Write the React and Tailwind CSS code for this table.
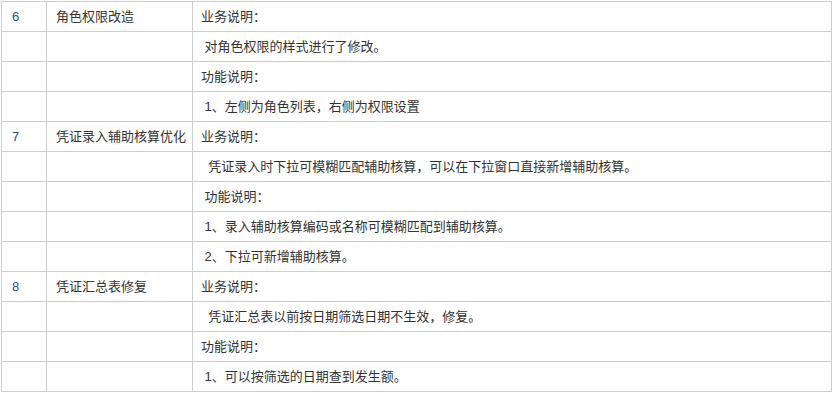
const rows = [
  { no: '6', name: '角色权限改造', text: '业务说明：' },
  { text: '\u00a0对角色权限的样式进行了修改。' },
  { text: '功能说明：' },
  { text: '\u00a01、左侧为角色列表，右侧为权限设置' },
  { no: '7', name: '凭证录入辅助核算优化', text: '业务说明：' },
  { text: '\u00a0\u00a0凭证录入时下拉可模糊匹配辅助核算，可以在下拉窗口直接新增辅助核算。' },
  { text: '\u00a0功能说明：' },
  { text: '\u00a01、录入辅助核算编码或名称可模糊匹配到辅助核算。' },
  { text: '\u00a02、下拉可新增辅助核算。' },
  { no: '8', name: '凭证汇总表修复', text: '业务说明：' },
  { text: '\u00a0\u00a0凭证汇总表以前按日期筛选日期不生效，修复。' },
  { text: '功能说明：' },
  { text: '\u00a01、可以按筛选的日期查到发生额。' },
];

export default function App() {
  const cell = "h-[30px] border-r border-b border-[#cbcdd1] flex items-center";

  return (
    <div className="w-[834px] h-[394px] bg-white pt-px pl-px" style={{ fontFamily: '"Liberation Sans", "Noto Sans CJK SC", sans-serif' }}>
      <div className="w-[831px] border-l border-t border-[#cbcdd1] grid grid-cols-[45px_146px_639px] text-[13px] text-[#333333]">
        {rows.map((r, i) => (
          <div key={i} className="contents">
            <div className={`${cell} pl-[10px] text-[#24558a]`}>{r.no}</div>
            <div className={`${cell} pl-[9px]`}>{r.name}</div>
            <div className={`${cell} pl-[8px] whitespace-pre`}>{r.text}</div>
          </div>
        ))}
      </div>
    </div>
  );
}
